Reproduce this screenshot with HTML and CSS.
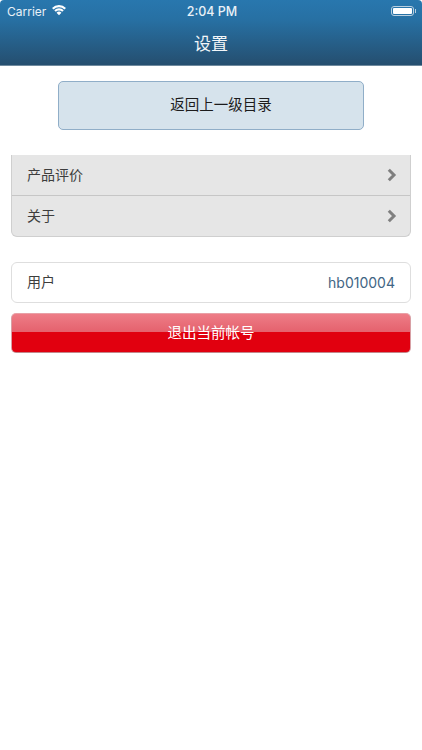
FILE: index.html
```html
<!DOCTYPE html>
<html lang="zh-CN">
<head>
<meta charset="utf-8">
<title>设置</title>
<link rel="stylesheet" href="styles.css">
</head>
<body>
<header class="header">
  <div class="status">
    <div class="status-left">
      <span>Carrier</span>
      <svg class="wifi" viewBox="0 0 16 12" width="14" height="10.500"><path d="M8 11.800 5.200 8.800a4 4 0 0 1 5.600 0zM4.300 7.800 2.600 6a7.600 7.600 0 0 1 10.800 0l-1.700 1.800a5.200 5.200 0 0 0-7.400 0zM1.800 5.100 0 3.300a11.400 11.400 0 0 1 16 0l-1.800 1.800a8.800 8.800 0 0 0-12.400 0z" fill="#fff"/></svg>
    </div>
    <div class="status-time">2:04 PM</div>
    <div class="status-right">
      <div class="battery"><div class="battery-fill"></div></div>
      <div class="battery-cap"></div>
    </div>
  </div>
  <h1 class="title">设置</h1>
</header>
<main class="content">
  <a class="back">返回上一级目录</a>
  <ul class="list">
    <li class="row">
      <span>产品评价</span>
      <svg class="chev" viewBox="0 0 10 14" width="10" height="14"><path d="M1.800 1.800 7 7l-5.200 5.200" fill="none" stroke="#7f7f7f" stroke-width="3"/></svg>
    </li>
    <li class="row">
      <span>关于</span>
      <svg class="chev" viewBox="0 0 10 14" width="10" height="14"><path d="M1.800 1.800 7 7l-5.200 5.200" fill="none" stroke="#7f7f7f" stroke-width="3"/></svg>
    </li>
  </ul>
  <div class="user">
    <span class="user-label">用户</span>
    <span class="user-id">hb010004</span>
  </div>
  <a class="logout">退出当前帐号</a>
</main>
</body>
</html>
```
FILE: styles.css
```css
* { box-sizing: border-box; }
html, body { margin: 0; padding: 0; }
body {
  width: 422px;
  height: 750px;
  overflow: hidden;
  background: #fff;
  font-family: "Noto Sans CJK SC", "Liberation Sans", sans-serif;
}
.header {
  height: 66px;
  background: linear-gradient(#2877ae 0, #2770a3 20px, #254f70 64px);
  border-bottom: 1px solid #6f8a9e;
  border-radius: 4px 4px 0 0;
  color: #fff;
}
.status {
  height: 22px;
  padding: 0 6px 0 7px;
  display: grid;
  grid-template-columns: 1fr auto 1fr;
  align-items: center;
  font-family: Inter, "Liberation Sans", sans-serif;
  font-size: 12px;
  color: #e9f1f7;
}
.status-left { display: flex; align-items: center; gap: 6px; }
.wifi { margin-top: -1px; }
.status-time { font-weight: 500; font-size: 12.500px; padding: 1px 0 0 1px; }
.status-right { display: flex; align-items: center; justify-content: flex-end; }
.battery {
  width: 23px;
  height: 10px;
  border: 1px solid #b9cfdf;
  border-radius: 3px;
  padding: 1px;
}
.battery-fill { width: 100%; height: 100%; background: #fff; border-radius: 1px; }
.battery-cap { width: 1px; height: 4px; background: #b9cfdf; margin-left: 1px; }
.title {
  margin: 0;
  height: 43px;
  padding-bottom: 2px;
  display: flex;
  align-items: center;
  justify-content: center;
  font-size: 17px;
  font-weight: 400;
  color: #f2f6f9;
}
.content {
  padding: 15px 11px 0;
  display: flex;
  flex-direction: column;
}
.back {
  align-self: center;
  width: 306px;
  height: 49px;
  padding: 0 0 4px 20px;
  display: flex;
  align-items: center;
  justify-content: center;
  background: #d6e3ec;
  border: 1px solid #90aec8;
  border-radius: 5px;
  font-size: 14.500px;
  color: #1c1c1c;
}
.list {
  list-style: none;
  margin: 25px 0 0;
  padding: 0;
  background: #e6e6e6;
  border: 1px solid #cfcfcf;
  border-top: 0;
  border-radius: 0 0 6px 6px;
  color: #3d3d3d;
  font-size: 14px;
}
.row {
  height: 40px;
  padding: 0 13px 0 15px;
  display: flex;
  align-items: center;
  justify-content: space-between;
}
.row span { padding-bottom: 3px; }
.row:first-child { height: 41px; border-bottom: 1px solid #c6c6c6; }
.user {
  margin-top: 25px;
  height: 41px;
  padding: 0 15px;
  display: flex;
  align-items: center;
  justify-content: space-between;
  background: #fff;
  border: 1px solid #dedede;
  border-radius: 6px;
  font-size: 14px;
  color: #3d3d3d;
}
.user-label { padding-bottom: 3px; }
.user-id {
  font-family: Inter, "Liberation Sans", sans-serif;
  font-size: 14px;
  color: #3f6584;
}
.logout {
  margin-top: 10px;
  height: 40px;
  padding-bottom: 3px;
  display: flex;
  align-items: center;
  justify-content: center;
  background: linear-gradient(#ee7d87 0, #e5616d 18px, #e1000f 18px, #e1000f 100%);
  border: 1px solid #d8a0a5;
  border-top-color: #e9a0a6;
  border-bottom-color: #c2878b;
  border-radius: 5px;
  color: #fff;
  font-size: 14.500px;
}
```
